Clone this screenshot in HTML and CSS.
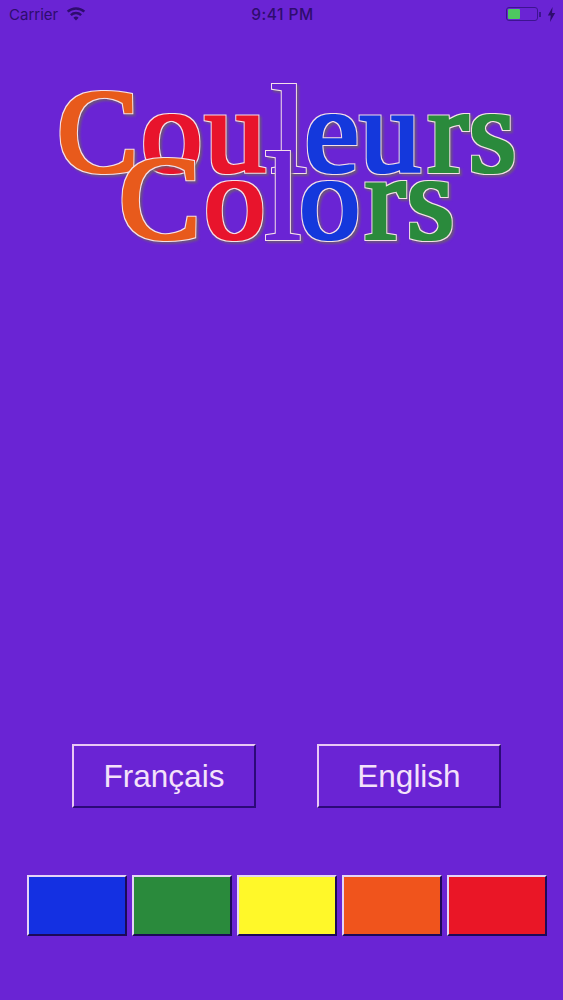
FILE: index.html
```html
<!DOCTYPE html>
<html lang="fr">
<head>
<meta charset="utf-8">
<title>Couleurs Colors</title>
<link rel="stylesheet" href="styles.css">
</head>
<body>
<main class="screen">
  <header class="status">
    <div class="status-left">
      <span>Carrier</span>
      <svg class="wifi" viewBox="0 0 20 14" width="20" height="14" aria-hidden="true">
        <path d="M10 13.5 7.4 10.7a3.8 3.8 0 0 1 5.2 0Z"/>
        <path d="M5.700 9 4 7.200a8.600 8.600 0 0 1 12 0L14.300 9a6.200 6.200 0 0 0-8.600 0Z"/>
        <path d="M2.500 5.600.8 3.800a13.400 13.400 0 0 1 18.400 0l-1.700 1.800a11 11 0 0 0-15 0Z"/>
      </svg>
    </div>
    <div class="status-time">9:41 PM</div>
    <div class="status-right">
      <span class="battery"><span class="battery-level"></span></span>
      <span class="battery-cap"></span>
      <svg class="bolt" viewBox="0 0 8 14" width="9" height="15" aria-hidden="true">
        <path d="M5 0 .6 8h2.700L2.600 14 7.400 5.600H4.500Z"/>
      </svg>
    </div>
  </header>

  <svg class="logo" viewBox="0 0 563 190" width="563" height="190">
    <defs>
      <filter id="logo-fx" x="-20%" y="-20%" width="140%" height="140%" color-interpolation-filters="sRGB">
        <feMorphology in="SourceGraphic" operator="dilate" radius="1.800 .9" result="body"/>
        <feMorphology in="SourceAlpha" operator="dilate" radius="2.800 2" result="grown"/>
        <feFlood flood-color="#f4dfe8"/>
        <feComposite in2="grown" operator="in" result="outline"/>
        <feOffset in="grown" dx="2" dy="2"/>
        <feGaussianBlur stdDeviation=".9" result="soft"/>
        <feFlood flood-color="#6c5c70" flood-opacity=".85"/>
        <feComposite in2="soft" operator="in" result="shadow"/>
        <feMerge result="all">
          <feMergeNode in="shadow"/>
          <feMergeNode in="outline"/>
          <feMergeNode in="body"/>
        </feMerge>
        <feGaussianBlur in="all" stdDeviation=".35"/>
      </filter>
    </defs>
    <g class="word">
      <text class="red" x="141.400 205" y="102">ou</text>
      <text class="orange" x="57.500" y="102">C</text>
      <text class="hollow" x="271.500" y="102">l</text>
      <text class="blue" x="305 360" y="102">eu</text>
      <text class="green" x="428 469" y="102">rs</text>
    </g>
    <g class="word">
      <text class="orange" x="119.500" y="169">C</text>
      <text class="red" x="204.500" y="169">o</text>
      <text class="hollow" x="265.500" y="169">l</text>
      <text class="blue" x="299.500" y="169">o</text>
      <text class="green" x="365 407" y="169">rs</text>
    </g>
  </svg>

  <div class="languages">
    <button class="lang" type="button">Français</button>
    <button class="lang" type="button">English</button>
  </div>

  <div class="swatches">
    <div class="swatch swatch-blue"></div>
    <div class="swatch swatch-green"></div>
    <div class="swatch swatch-yellow"></div>
    <div class="swatch swatch-orange"></div>
    <div class="swatch swatch-red"></div>
  </div>
</main>
</body>
</html>
```
FILE: styles.css
```css
* { box-sizing: border-box; }
html, body { margin: 0; padding: 0; }
body {
  background: #6a24d4;
  font-family: "Liberation Sans", Arial, sans-serif;
}
.screen {
  width: 563px;
  height: 1000px;
  display: flex;
  flex-direction: column;
  overflow: hidden;
}
.status {
  height: 30px;
  flex: none;
  display: grid;
  grid-template-columns: 1fr auto 1fr;
  align-items: center;
  padding: 0 7px 2px 9px;
  color: #2e0c6e;
  font-family: Inter, "Liberation Sans", sans-serif;
  font-size: 15px;
}
.status-left { display: flex; align-items: center; gap: 8px; }
.wifi { fill: #2e0c6e; }
.status-time { font-weight: 500; font-size: 15.500px; letter-spacing: .5px; }
.status-right { display: flex; align-items: center; justify-content: flex-end; }
.battery {
  width: 32px;
  height: 14px;
  border: 1px solid #3d1490;
  border-radius: 3px;
  padding: 1px;
  display: flex;
}
.battery-level { width: 12px; background: #4ec860; border-radius: 1px; }
.battery-cap { width: 2px; height: 5px; background: #3d1490; margin: 0 6px 0 1px; }
.bolt { fill: #2e0c6e; }

.logo { display: block; flex: none; margin-top: 40px; overflow: visible; }
.word text {
  font-family: "Liberation Serif", "Times New Roman", serif;
  font-size: 121px;
  filter: url(#logo-fx);
}
.red { fill: #e8142c; }
.orange { fill: #e85a1c; }
.blue { fill: #1438dc; }
.green { fill: #2a8a3c; }
.word .hollow { fill: #6a24d4; font-size: 125px; }

.languages {
  margin-top: 484px;
  padding: 0 62px 0 72px;
  display: flex;
  justify-content: space-between;
}
.lang {
  width: 184px;
  height: 64px;
  padding: 0;
  background: #6a24d4;
  border-style: solid;
  border-width: 2px;
  border-color: #e8c8f4 #2c0a78 #2c0a78 #e8c8f4;
  color: #f4e2fa;
  font-family: "Liberation Sans", Arial, sans-serif;
  font-size: 31.500px;
}

.swatches {
  margin-top: 67px;
  padding: 0 16px 0 27px;
  display: grid;
  grid-template-columns: repeat(5, 1fr);
  gap: 4.500px;
}
.swatch {
  height: 61px;
  border-style: solid;
  border-width: 2px;
  border-color: #e4d4f6 #1c0a58 #1c0a58 #e4d4f6;
}
.swatch-blue { background: #1430e2; }
.swatch-green { background: #2a8a3c; }
.swatch-yellow { background: #fff829; }
.swatch-orange { background: #f0541c; }
.swatch-red { background: #ea1626; }
```
